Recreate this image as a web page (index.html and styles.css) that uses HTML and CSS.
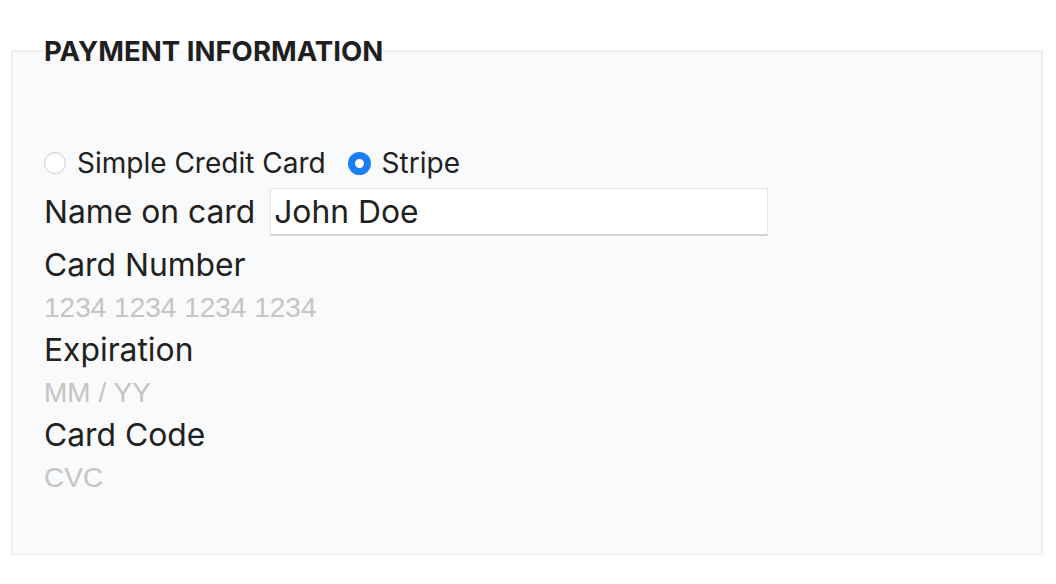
FILE: index.html
```html
<!DOCTYPE html>
<html lang="en">
<head>
<meta charset="utf-8">
<title>Payment information</title>
<link rel="stylesheet" href="styles.css">
</head>
<body>
<div class="page">
  <fieldset class="payment">
    <legend class="payment-legend">PAYMENT INFORMATION</legend>
    <div class="methods">
      <label class="method"><span class="radio"></span>Simple Credit Card</label>
      <label class="method"><span class="radio radio-on"></span>Stripe</label>
    </div>
    <div class="name-row">
      <span class="label">Name on card</span>
      <div class="text-input">John Doe</div>
    </div>
    <div class="field">
      <div class="label">Card Number</div>
      <div class="placeholder">1234 1234 1234 1234</div>
    </div>
    <div class="field">
      <div class="label">Expiration</div>
      <div class="placeholder">MM / YY</div>
    </div>
    <div class="field">
      <div class="label">Card Code</div>
      <div class="placeholder">CVC</div>
    </div>
  </fieldset>
</div>
</body>
</html>
```

FILE: styles.css
```css
html, body {
  margin: 0;
  padding: 0;
  background: #ffffff;
}

.page {
  padding: 36px 13px 0 11px;
  font-family: Inter, "Noto Sans", sans-serif;
  color: #212121;
}

.payment {
  margin: 0;
  min-width: 0;
  height: 519px;
  box-sizing: border-box;
  border: 2px solid #f0f0f1;
  background: #f9fafb;
  padding: 70px 31px 0 31px;
  display: flex;
  flex-direction: column;
}

.payment-legend {
  padding: 0;
  font-size: 27.6px;
  font-weight: 700;
  line-height: 30px;
  color: #1f1f1f;
}

.methods {
  display: flex;
  align-items: center;
  gap: 22px;
  height: 40px;
  margin-top: 7px;
}

.method {
  display: flex;
  align-items: center;
  gap: 11px;
  font-size: 28px;
  line-height: 40px;
}

.radio {
  width: 22px;
  height: 22px;
  box-sizing: border-box;
  border-radius: 50%;
  border: 1px solid #cfcfcf;
  background: #ffffff;
  box-shadow: inset 0 1px 2px rgba(0, 0, 0, 0.06);
}

.radio-on {
  width: 23px;
  height: 23px;
  border: 7.5px solid #1a7ff6;
  background: #ffffff;
  box-shadow: none;
}

.name-row {
  display: flex;
  align-items: center;
  gap: 15px;
  margin-top: 5px;
}

.label {
  font-size: 31.8px;
  line-height: 40px;
}

.text-input {
  width: 498px;
  height: 48px;
  box-sizing: border-box;
  border: 1px solid #e6e6e6;
  border-bottom: 2px solid #d4d4d4;
  background: #ffffff;
  padding: 0 3px;
  font-size: 31.8px;
  line-height: 45px;
}

.field {
  display: flex;
  flex-direction: column;
}

.name-row + .field {
  margin-top: 9px;
}

.placeholder {
  font-family: "Liberation Sans", Arial, sans-serif;
  font-size: 28px;
  line-height: 45px;
  color: #c5c5c5;
}
```
